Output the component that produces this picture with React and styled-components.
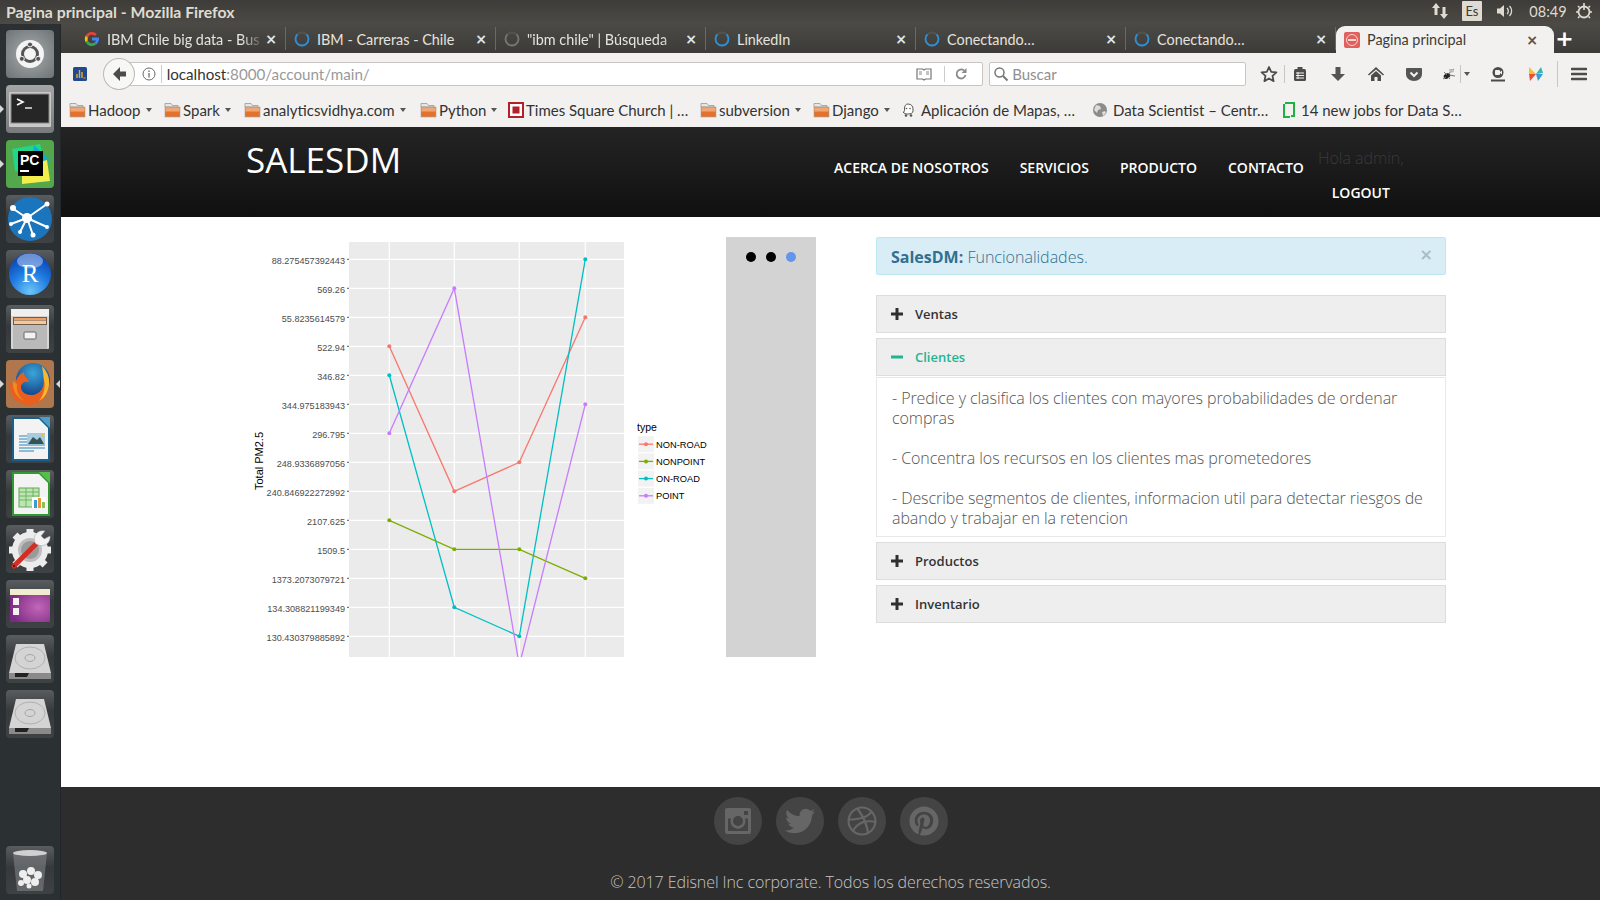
import React from 'react';
import styled, { createGlobalStyle } from 'styled-components';
import { FaTwitter, FaDribbble, FaPinterest } from 'react-icons/fa';

const GlobalStyle = createGlobalStyle`
  html, body { margin: 0; padding: 0; height: 100%; overflow: hidden; background: #fff; }
  * { box-sizing: border-box; }
  #root { width: 1600px; height: 900px; }
`;

const Screen = styled.div`
  width: 1600px;
  height: 900px;
  display: flex;
  flex-direction: column;
  font-family: "Open Sans", sans-serif;
  overflow: hidden;
`;

/* top ubuntu bar */
const TitleBar = styled.div`
  height: 24px;
  flex: none;
  display: flex;
  align-items: center;
  padding: 0 0 2px 6px;
  background: linear-gradient(#3d3c38, #4c4a45);
  color: #dfdbd2;
  font: 700 15.8px Lato, sans-serif;
`;

const Tray = styled.div`
  margin-left: auto;
  display: flex;
  align-items: center;
  height: 24px;
  color: #dfdbd2;
  font: 400 14.5px Lato, sans-serif;
`;

const TraySlot = styled.div`
  width: ${(p) => p.$w}px;
  margin-right: ${(p) => p.$mr || 0}px;
  display: flex;
  justify-content: center;
  align-items: center;
`;

const LangBox = styled.div`
  width: 20px;
  height: 20px;
  margin-right: 8px;
  background: #dfdbd2;
  color: #3c3b37;
  border-radius: 1px;
  font-size: 13px;
  display: flex;
  align-items: center;
  justify-content: center;
`;

const Body = styled.div`
  flex: 1;
  display: flex;
  min-height: 0;
`;

/* launcher down the left */
const Launcher = styled.div`
  width: 61px;
  flex: none;
  background: #2b3033;
  padding: 6px 0 6px 6px;
  display: flex;
  flex-direction: column;
  gap: 7px;
  border-right: 1px solid #23272a;
`;

const Tile = styled.div`
  position: relative;
  width: 48px;
  height: 48px;
  flex: none;
  border-radius: 4px;
  background: ${(p) => p.$bg || 'linear-gradient(#5a5d5f, #35393b 45%, #3e4244)'};
  margin-top: ${(p) => (p.$bottom ? 'auto' : '0')};
  svg { display: block; }
`;

const Pip = styled.span`
  position: absolute;
  top: 20px;
  ${(p) => (p.$right ? 'right: -6px;' : 'left: -6px;')}
  border-style: solid;
  border-width: 4px 0 4px 4px;
  border-color: transparent transparent transparent #d8d8d8;
  ${(p) => p.$right && 'border-width: 4px 4px 4px 0; border-color: transparent #d8d8d8 transparent transparent;'}
`;

const Firefox = styled.div`
  flex: 1;
  min-width: 0;
  display: flex;
  flex-direction: column;
`;

const TabStrip = styled.div`
  height: 29px;
  flex: none;
  display: flex;
  align-items: stretch;
  padding-left: 15px;
  background: linear-gradient(#4c4a45, #3c3b37);
`;

const Tab = styled.div`
  width: 210px;
  flex: none;
  display: flex;
  align-items: center;
  padding: 1px 8px 0;
  margin-top: 3px;
  color: #e4e3df;
  font: 400 14.4px Lato, sans-serif;
  border-right: 1px solid #6a6963;
  height: 23px;
`;

const ActiveTab = styled(Tab)`
  width: 218px;
  height: 27px;
  margin: 2px 0 0 0;
  padding: 0 16px 0 8px;
  border: 0;
  border-radius: 9px 9px 0 0;
  background: #f2f1f0;
  color: #3c3b37;
`;

const TabLabel = styled.span`
  flex: 1;
  margin-left: 7px;
  white-space: nowrap;
  overflow: hidden;
  ${(p) => p.$fade && 'mask-image: linear-gradient(90deg, #000 85%, transparent);'}
`;

const TabClose = styled.span`
  width: 12px;
  text-align: center;
  font: 700 14px "DejaVu Sans", sans-serif;
  color: ${(p) => (p.$dark ? '#555' : '#e4e3df')};
`;

const NewTab = styled.div`
  width: 21px;
  color: #fff;
  font: 700 22px "DejaVu Sans", sans-serif;
  display: flex;
  align-items: center;
  justify-content: center;
`;

const NavBar = styled.div`
  height: 42px;
  flex: none;
  background: #f2f1f0;
  display: flex;
  align-items: center;
  padding-left: 11px;
`;

const BackButton = styled.div`
  position: relative;
  z-index: 1;
  width: 32px;
  height: 32px;
  margin-left: 15px;
  border-radius: 50%;
  background: #f7f7f6;
  border: 1px solid #bcb9b4;
  display: flex;
  align-items: center;
  justify-content: center;
`;

const UrlBar = styled.div`
  width: 874px;
  height: 24px;
  margin-left: -15px;
  padding: 0 6px 0 21px;
  background: #fff;
  border: 1px solid #c9c6c1;
  border-radius: 2px;
  display: flex;
  align-items: center;
  font: 400 15.2px Lato, sans-serif;
  color: #999;
  b { font-weight: 400; color: #333; }
`;

const UrlText = styled.div`
  flex: 1;
  margin-left: 5px;
  padding-left: 5px;
  border-left: 1px solid #ccc;
`;

const UrlTool = styled.div`
  width: ${(p) => p.$w}px;
  height: 16px;
  margin-left: ${(p) => p.$ml || 0}px;
  display: flex;
  justify-content: center;
  align-items: center;
  ${(p) => p.$line && 'border-left: 1px solid #ccc;'}
`;

const SearchBar = styled.div`
  width: 260px;
  height: 24px;
  margin-left: 6px;
  padding-left: 3px;
  background: #fff;
  border: 1px solid #c9c6c1;
  border-radius: 2px;
  display: flex;
  align-items: center;
  gap: 3px;
  font: 400 15px Lato, sans-serif;
  color: #8f8f8f;
`;

const NavIcon = styled.div`
  width: ${(p) => p.$w}px;
  margin-left: ${(p) => p.$ml || 0}px;
  flex: none;
  display: flex;
  justify-content: center;
  align-items: center;
`;

const NavDivider = styled.div`
  width: 1px;
  height: ${(p) => p.$h || 18}px;
  flex: none;
  background: #c9c6c1;
  margin-left: ${(p) => p.$ml || 0}px;
  margin-right: ${(p) => p.$mr || 0}px;
`;

const BookmarkBar = styled.div`
  height: 32px;
  flex: none;
  background: #f2f1f0;
  display: flex;
  align-items: center;
  padding: 0 0 2px 8px;
  font: 400 15px Lato, sans-serif;
  color: #333;
`;

const Bookmark = styled.div`
  width: ${(p) => p.$w}px;
  flex: none;
  display: flex;
  align-items: center;
  gap: ${(p) => p.$gap || 2}px;
  white-space: nowrap;
`;

const Caret = styled.span`
  margin-left: ${(p) => (p.$flat ? 0 : 3)}px;
  border-style: solid;
  border-width: 4px 3px 0 3px;
  border-color: #555 transparent transparent transparent;
`;

/* the django page itself */
const Page = styled.div`
  flex: 1;
  min-height: 0;
  display: flex;
  flex-direction: column;
  background: #fff;
`;

const Header = styled.div`
  height: 90px;
  flex: none;
  display: flex;
  align-items: flex-start;
  padding-left: 185px;
  background: linear-gradient(#242424, #101010);
  color: #fff;
`;

const Logo = styled.div`
  width: 588px;
  font-size: 35px;
  font-weight: 400;
  line-height: 66px;
`;

const MainNav = styled.div`
  display: flex;
  gap: 31px;
  margin-top: 31px;
  font-size: 14px;
  font-weight: 600;
  line-height: 20px;
`;

const UserBlock = styled.div`
  width: 92px;
  margin-left: 11px;
  text-align: center;
  font-size: 14px;
  font-weight: 600;
  padding-top: 19px;
`;

const Hola = styled.div`
  color: #3a3a3a;
  font-size: 16px;
  font-weight: 300;
  line-height: 25px;
  margin-bottom: 12px;
`;

const Content = styled.div`
  flex: 1;
  display: flex;
  align-items: flex-start;
  padding: 20px 0 0 179px;
`;

const ChartSvg = styled.svg`
  display: block;
  flex: none;
  font-family: "Liberation Sans", Arial, sans-serif;
`;

const Carousel = styled.div`
  width: 90px;
  height: 420px;
  flex: none;
  background: #d3d3d3;
  display: flex;
  justify-content: center;
  gap: 10px;
  padding-top: 15px;
`;

const Dot = styled.span`
  width: 10px;
  height: 10px;
  border-radius: 50%;
  background: ${(p) => (p.$on ? '#6495ed' : '#000')};
`;

const Side = styled.div`
  width: 570px;
  margin-left: 60px;
  flex: none;
`;

const Alert = styled.div`
  height: 38px;
  display: flex;
  justify-content: space-between;
  align-items: center;
  padding: 1px 15px 0 14px;
  background: #d9edf7;
  border: 1px solid #bce8f1;
  border-radius: 2px;
  color: #31708f;
  font-size: 16px;
  font-weight: 300;
  margin-bottom: 20px;
  b { font-weight: 700; }
`;

const AlertClose = styled.span`
  color: #a9bcc6;
  font: 700 16px "DejaVu Sans", sans-serif;
  margin: -5px -3px 0 0;
`;

const AccHead = styled.div`
  height: 38px;
  display: flex;
  align-items: center;
  gap: 12px;
  padding-left: 14px;
  margin-bottom: ${(p) => (p.$open ? 1 : 5)}px;
  background: #eee;
  border: 1px solid #ddd;
  color: ${(p) => (p.$open ? '#1fb592' : '#333')};
  font-size: 13px;
  font-weight: 600;
`;

const AccBody = styled.div`
  height: 160px;
  margin-bottom: 5px;
  padding: 10px 15px;
  border: 1px solid #e8e8e8;
  color: #555;
  font-size: 16px;
  font-weight: 300;
  letter-spacing: -0.07px;
  line-height: 20px;
  white-space: nowrap;
`;

const Footer = styled.div`
  height: 113px;
  flex: none;
  background: #2d2d2d;
  display: flex;
  flex-direction: column;
  align-items: center;
  padding-top: 10px;
`;

const Socials = styled.div`
  display: flex;
  gap: 14px;
`;

const Social = styled.div`
  width: 48px;
  height: 48px;
  border-radius: 50%;
  background: #444;
  color: #666;
  display: flex;
  align-items: center;
  justify-content: center;
  font-size: 30px;
`;

const Copy = styled.div`
  margin-top: 26px;
  color: #c4c4c4;
  font-size: 16px;
  font-weight: 300;
  letter-spacing: -0.08px;
  line-height: 22px;
`;

const SmallSvg = styled.svg`
  flex: none;
  display: block;
`;

/* ---------- chart data ---------- */
const yLabels = [
  '88.275457392443', '569.26', '55.8235614579', '522.94', '346.82', '344.975183943',
  '296.795', '248.9336897056', '240.846922272992', '2107.625', '1509.5', '1373.2073079721',
  '134.308821199349', '130.430379885892',
];
const xGrid = [149.3, 214.3, 279.3, 345.3];
const rowY = (i) => 22.3 + i * 29;
const series = [
  { name: 'NON-ROAD', color: '#F8766D', rows: [3, 8, 7, 2] },
  { name: 'NONPOINT', color: '#7CAE00', rows: [9, 10, 10, 11] },
  { name: 'ON-ROAD', color: '#00BFC4', rows: [4, 12, 13, 0] },
  { name: 'POINT', color: '#C77CFF', rows: [6, 1, 14, 5] },
];

const Chart = () => (
  <ChartSvg width="486" height="421" viewBox="0 0 486 421">
    <defs>
      <clipPath id="plot"><rect x="109" y="5" width="275" height="415" /></clipPath>
    </defs>
    <rect x="109" y="5" width="275" height="415" fill="#ebebeb" />
    {yLabels.map((l, i) => (
      <g key={l}>
        <line x1="109" x2="384" y1={rowY(i)} y2={rowY(i)} stroke="#fff" strokeWidth="1.2" />
        <line x1="107" x2="109" y1={rowY(i)} y2={rowY(i)} stroke="#555" strokeWidth="1" />
        <text x="105" y={rowY(i) + 4.2} textAnchor="end" fontSize="9.1" fill="#4d4d4d">{l}</text>
      </g>
    ))}
    {xGrid.map((x) => <line key={x} x1={x} x2={x} y1="5" y2="420" stroke="#fff" strokeWidth="1.2" />)}
    <g clipPath="url(#plot)">
      {series.map((s) => (
        <g key={s.name}>
          <polyline
            fill="none"
            stroke={s.color}
            strokeWidth="1.3"
            points={s.rows.map((r, i) => `${xGrid[i]},${rowY(r)}`).join(' ')}
          />
          {s.rows.map((r, i) => <circle key={i} cx={xGrid[i]} cy={rowY(r)} r="2" fill={s.color} />)}
        </g>
      ))}
    </g>
    <text transform="translate(23 224) rotate(-90)" textAnchor="middle" fontSize="11" fill="#000">Total PM2.5</text>
    <text x="397" y="194" fontSize="10.5" fill="#000">type</text>
    {series.map((s, i) => (
      <g key={s.name} transform={`translate(398 ${199.2 + i * 17.2})`}>
        <rect width="16" height="16" fill="#f2f2f2" />
        <line x1="1" x2="15" y1="8" y2="8" stroke={s.color} strokeWidth="1.3" />
        <circle cx="8" cy="8" r="2" fill={s.color} />
        <text x="18" y="11.5" fontSize="9.3" fill="#000">{s.name}</text>
      </g>
    ))}
  </ChartSvg>
);

/* ---------- launcher icons ---------- */
const Ico = ({ children }) => <svg width="48" height="48" viewBox="0 0 48 48">{children}</svg>;

const UbuntuIcon = () => (
  <Ico>
    <circle cx="24" cy="24" r="14" fill="#f4f4f4" />
    <circle cx="24" cy="24" r="7.5" fill="none" stroke="#555" strokeWidth="3" />
    <circle cx="24" cy="14.5" r="2.5" fill="#555" stroke="#f4f4f4" />
    <circle cx="15.8" cy="28.8" r="2.5" fill="#555" stroke="#f4f4f4" />
    <circle cx="32.2" cy="28.8" r="2.5" fill="#555" stroke="#f4f4f4" />
  </Ico>
);
const TerminalIcon = () => (
  <Ico>
    <rect x="3" y="7" width="42" height="35" rx="1" fill="#c9c9c7" />
    <rect x="5" y="9" width="38" height="29" fill="#262626" stroke="#8a8a8a" />
    <path d="M11 14l6 3-6 3" fill="none" stroke="#fff" strokeWidth="1.6" />
    <path d="M19 23h7" stroke="#ddd" strokeWidth="1.6" />
  </Ico>
);
const PyCharmIcon = () => (
  <Ico>
    <path d="M6 9l28-5 6 20-12 12-19-5z" fill="#21d789" />
    <path d="M28 5l16 15-9 8-9-9z" fill="#0faed0" />
    <path d="M16 27l25-7 3 21-28 3z" fill="#f3ee4e" />
    <rect x="12" y="11" width="25" height="25" fill="#000" />
    <text x="14" y="25" fontFamily="Liberation Sans" fontWeight="700" fontSize="14" fill="#fff">PC</text>
    <rect x="14" y="30" width="9" height="2" fill="#fff" />
  </Ico>
);
const NetworkIcon = () => (
  <Ico>
    <circle cx="24" cy="24" r="22" fill="#1b75bc" />
    <g stroke="#fff" strokeWidth="2">
      <path d="M21 23L6 13M21 23L41 9M21 23L5 29M21 23L14 37M21 23L27 40M21 23L41 32" />
    </g>
    <g fill="#fff">
      <circle cx="21" cy="23" r="5" /><circle cx="7" cy="13" r="3" /><circle cx="41" cy="9" r="2.5" />
      <circle cx="5" cy="29" r="2" /><circle cx="14" cy="37" r="2" /><circle cx="27" cy="40" r="2.5" />
      <circle cx="41" cy="32" r="2" />
    </g>
  </Ico>
);
const RIcon = () => (
  <Ico>
    <defs>
      <radialGradient id="rb" cx="50%" cy="92%" r="85%">
        <stop offset="0" stopColor="#6cc6f7" /><stop offset="0.55" stopColor="#1f7be0" /><stop offset="1" stopColor="#0c47b8" />
      </radialGradient>
    </defs>
    <circle cx="24" cy="24" r="21" fill="url(#rb)" />
    <ellipse cx="24" cy="11" rx="13" ry="7.5" fill="#fff" opacity="0.4" />
    <text x="24" y="32" textAnchor="middle" fontFamily="Liberation Serif" fontSize="25" fill="#fff">R</text>
  </Ico>
);
const FilesIcon = () => (
  <Ico>
    <rect x="5" y="4" width="38" height="40" rx="1" fill="#d6d6d6" />
    <rect x="5" y="4" width="38" height="7" fill="#efefef" />
    <rect x="7" y="12" width="34" height="8" fill="#6d5b4c" />
    <path d="M8 13h32v2H8z" fill="#ef9f62" />
    <path d="M8 15.5h32V19H8z" fill="#f5c89b" />
    <path d="M7 20h34v24H7z" fill="#b9b9b9" />
    <rect x="18" y="27" width="12" height="7" rx="1" fill="#f2f2f2" stroke="#666" />
  </Ico>
);
const FirefoxIcon = () => (
  <Ico>
    <defs>
      <radialGradient id="ffb" cx="50%" cy="30%" r="70%">
        <stop offset="0" stopColor="#3aa5d8" /><stop offset="1" stopColor="#123f86" />
      </radialGradient>
    </defs>
    <circle cx="27" cy="20" r="17" fill="url(#ffb)" />
    <path d="M41 13c6 13-2 32-18 32C10 45 2 34 4 21c1.5 3 3 5 5 5.5C9 21 12 15 18 12c-1 4 5 7 5 10-4-1-8 1-8 5 0 5 5 8 10 8 9 0 15-8 12-19z" fill="#ea5f1e" />
    <path d="M36 6c6 6 9 15 6 23-1 5-5 10-9 12 4-5 7-13 5-21z" fill="#f7b62c" />
    <path d="M7 21c-1 8 3 17 12 20-7-4-9-11-8-17z" fill="#f28a1f" />
  </Ico>
);
const DocIcon = ({ edge, corner, children }) => (
  <Ico>
    <path d="M6 2h29l9 9v35H6z" fill={edge} />
    <path d="M33 2h11v11z" fill={corner} />
    <path d="M8 4h25l9 9v31H8z" fill="#f3f3f3" />
    {children}
  </Ico>
);
const WriterIcon = () => (
  <DocIcon edge="#18618f" corner="#4aa0c9">
    <g stroke="#2d83b5" strokeWidth="1.2">
      <path d="M13 21h8M13 24h8M13 27h8M13 30h26M13 33h26M13 36h15" />
    </g>
    <rect x="21" y="18" width="18" height="11" fill="#a9cbe0" />
    <path d="M22 29l5-7 4 3 3-3 4 7z" fill="#355" />
    <circle cx="37" cy="20" r="1.5" fill="#f2c230" />
  </DocIcon>
);
const CalcIcon = () => (
  <DocIcon edge="#2f9a2f" corner="#59bd4a">
    <rect x="13" y="18" width="20" height="19" fill="#bfe3b4" stroke="#5dad4f" />
    <path d="M13 22h20M13 26h20M13 30h20M20 18v19M27 18v19" stroke="#5dad4f" strokeWidth="0.8" />
    <rect x="26" y="27" width="14" height="11" fill="#fff" />
    <rect x="28" y="30" width="3" height="8" fill="#3b9bd5" />
    <rect x="32" y="28" width="3" height="10" fill="#e8963a" />
    <rect x="36" y="32" width="3" height="6" fill="#8cc152" />
  </DocIcon>
);
const SettingsIcon = () => (
  <Ico>
    <circle cx="24" cy="25" r="13" fill="#bdbdbd" />
    <circle cx="24" cy="25" r="15" fill="none" stroke="#ececec" strokeWidth="6" />
    <circle cx="24" cy="25" r="9" fill="#9a9a9a" />
    <g stroke="#ececec" strokeWidth="7">
      <path d="M24 4v6M24 40v6M3 25h5M40 25h5M9 10l4 4M35 36l4 4M9 40l4-4" />
    </g>
    <path d="M8 41L31 18" stroke="#d02f25" strokeWidth="5" strokeLinecap="round" />
    <circle cx="8" cy="41" r="1.2" fill="#7a120d" />
    <path d="M29 18c-3-7 3-14 10-12l-4 5 3 3 6-3c1 8-8 13-15 7z" fill="#f2f2f2" stroke="#999" strokeWidth="0.5" />
  </Ico>
);
const PurpleIcon = () => (
  <Ico>
    <defs>
      <radialGradient id="pu" cx="70%" cy="55%" r="70%">
        <stop offset="0" stopColor="#c266b8" /><stop offset="1" stopColor="#7c2a84" />
      </radialGradient>
    </defs>
    <rect x="4" y="9" width="40" height="33" rx="1" fill="url(#pu)" />
    <rect x="4" y="9" width="40" height="6" fill="#f2eccf" />
    <rect x="7" y="18" width="6" height="7" fill="#f3f3f3" />
    <rect x="7" y="28" width="6" height="7" fill="#f3f3f3" />
  </Ico>
);
const DiskIcon = () => (
  <Ico>
    <path d="M10 9h28l7 29H3z" fill="#d4d4d4" />
    <rect x="3" y="38" width="42" height="6" fill="#8a8a8a" />
    <path d="M9 38h14l-2 4H9z" fill="#222" />
    <ellipse cx="24" cy="23" rx="15" ry="11" fill="none" stroke="#b0b0b0" />
    <ellipse cx="24" cy="23" rx="5" ry="3.5" fill="none" stroke="#a5a5a5" />
  </Ico>
);
const TrashIcon = () => (
  <Ico>
    <path d="M7 7h34l-4 38H11z" fill="#85898a" opacity="0.55" />
    <ellipse cx="24" cy="7" rx="17" ry="3" fill="#cfd1d1" />
    <g fill="#eee">
      <circle cx="17" cy="28" r="4" /><circle cx="25" cy="25" r="4" /><circle cx="32" cy="29" r="4" />
      <circle cx="21" cy="34" r="4" /><circle cx="29" cy="36" r="4" /><circle cx="15" cy="37" r="3" />
      <circle cx="23" cy="40" r="2.5" />
    </g>
  </Ico>
);

const launcherApps = [
  { key: 'ubuntu', bg: 'radial-gradient(circle at 50% 50%, #a9adae, #6d7375)', icon: <UbuntuIcon /> },
  { key: 'term', bg: 'linear-gradient(#a4a6a5, #77797a)', icon: <TerminalIcon />, pip: true },
  { key: 'pycharm', bg: '#52a84a', icon: <PyCharmIcon />, pip: true },
  { key: 'net', icon: <NetworkIcon /> },
  { key: 'r', icon: <RIcon /> },
  { key: 'files', icon: <FilesIcon /> },
  { key: 'firefox', bg: '#b0774d', icon: <FirefoxIcon />, pip: true, active: true },
  { key: 'writer', icon: <WriterIcon /> },
  { key: 'calc', icon: <CalcIcon /> },
  { key: 'settings', icon: <SettingsIcon /> },
  { key: 'purple', icon: <PurpleIcon /> },
  { key: 'disk1', icon: <DiskIcon /> },
  { key: 'disk2', icon: <DiskIcon /> },
];

/* ---------- small browser icons ---------- */
const Small = ({ w = 16, h = 16, children }) => (
  <SmallSvg width={w} height={h} viewBox={`0 0 ${w} ${h}`}>{children}</SmallSvg>
);

const GoogleG = () => (
  <Small>
    <path d="M8 1a7 7 0 0 1 4.8 1.9l-2 2A4.2 4.2 0 0 0 3.9 6.6L1.6 4.8A7 7 0 0 1 8 1z" fill="#ea4335" />
    <path d="M1.6 4.8l2.3 1.800a4.2 4.2 0 0 0 0 2.800L1.6 11.2a7 7 0 0 1 0-6.400z" fill="#fbbc05" />
    <path d="M3.9 9.4A4.2 4.2 0 0 0 10.3 11.5l2.2 1.800A7 7 0 0 1 1.6 11.2z" fill="#34a853" />
    <path d="M15 6.6H8v2.800h4a3.400 3.400 0 0 1-1.700 2.100l2.200 1.800c1.700-1.500 2.900-4 2.500-6.700z" fill="#4285f4" />
  </Small>
);
const Spinner = ({ color = '#2a90d9' }) => (
  <Small>
    <circle cx="8" cy="8" r="6.5" fill="none" stroke="#55534e" strokeWidth="1.8" />
    <path d="M3.4 3.4A6.5 6.5 0 1 0 12.6 3.4" fill="none" stroke={color} strokeWidth="1.8" />
  </Small>
);
const PageFav = () => (
  <Small>
    <rect width="16" height="16" rx="2" fill="#e0605c" />
    <circle cx="8" cy="8" r="5.5" fill="none" stroke="#f6d5d3" />
    <rect x="4" y="7" width="8" height="2" fill="#f6d5d3" />
  </Small>
);
const Folder = () => (
  <Small w={17} h={16}>
    <path d="M1 1.5h6l1.5 2H14V5H1z" fill="#e9e6e2" stroke="#9b9994" strokeWidth="0.8" />
    <rect x="1" y="5" width="15" height="10" fill="#e2722e" stroke="#aaa49c" strokeWidth="0.6" />
    <rect x="1.5" y="5.5" width="14" height="4" fill="#f0a774" />
  </Small>
);
const TimesIcon = () => (
  <Small>
    <rect x="1" y="1" width="14" height="14" fill="#fff" stroke="#b3202a" strokeWidth="2" />
    <rect x="4.5" y="4.5" width="7" height="7" fill="#b3202a" />
  </Small>
);
const WazeIcon = () => (
  <Small>
    <path d="M8 2c3.500 0 5 2.500 5 5v2c0 2-2 3-5 3-2 0-4-.5-5-2 1 0 1.500-.5 1.500-1.500V7C4.500 4 5.500 2 8 2z" fill="#fff" stroke="#555" />
    <circle cx="6.5" cy="6.5" r="0.8" fill="#555" /><circle cx="10" cy="6.5" r="0.8" fill="#555" />
    <circle cx="6" cy="13.5" r="1.3" fill="#555" /><circle cx="11" cy="13.5" r="1.3" fill="#555" />
  </Small>
);
const GlobeIcon = () => (
  <Small>
    <circle cx="8" cy="8" r="7" fill="#8b8b8b" />
    <path d="M4 3l4 1 1 3-3 1-1 3-3-3zM10 10l3-1 1 2-3 3z" fill="#dcdcdc" />
  </Small>
);
const GreenDoc = () => (
  <Small>
    <path d="M4 1h9v13h-3M3 2v13h6" fill="none" stroke="#1fb141" strokeWidth="2" />
  </Small>
);
const SalesFav = () => (
  <Small>
    <rect x="1" y="1" width="14" height="14" rx="1.5" fill="#1f4b8e" />
    <path d="M5 12V8M7.5 12V4M10 12V6" stroke="#f5a623" strokeWidth="1.4" />
    <path d="M11.5 12h2" stroke="#f5a623" />
  </Small>
);
const BackArrow = () => (
  <Small w={18} h={18}>
    <path d="M10 2L3 9l7 7v-4.500h6v-5h-6z" fill="#4c4c4c" />
  </Small>
);
const InfoIcon = () => (
  <Small w={14} h={14}>
    <circle cx="7" cy="7" r="6" fill="none" stroke="#6a6a6a" />
    <path d="M7 6v4.500M7 3.500v1.500" stroke="#6a6a6a" strokeWidth="1.3" />
  </Small>
);
const ReaderIcon = () => (
  <Small>
    <path d="M1 3h5.500L8 4l1.500-1H15v10H9.500L8 14l-1.500-1H1z" fill="#fff" stroke="#777" strokeWidth="1.2" />
    <path d="M3 6h3M3 8h3M10 6h3M10 8h3" stroke="#888" />
  </Small>
);
const ReloadIcon = () => (
  <Small w={14} h={14}>
    <path d="M11.500 8a4.500 4.500 0 1 1-1.500-4.500" fill="none" stroke="#8a8a8a" strokeWidth="1.8" />
    <path d="M12.500 1v5h-5z" fill="#8a8a8a" />
  </Small>
);
const SearchIcon = () => (
  <Small>
    <circle cx="6.5" cy="6.5" r="4.5" fill="none" stroke="#777" strokeWidth="1.5" />
    <path d="M10 10l4.500 4.500" stroke="#777" strokeWidth="2" />
  </Small>
);
const StarIcon = () => (
  <Small w={18} h={18}>
    <path d="M9 2l2.200 4.800 5.200.6-3.900 3.500 1.100 5.200L9 13.500l-4.600 2.600 1.100-5.200L1.600 7.400l5.200-.6z" fill="none" stroke="#4c4c4c" strokeWidth="1.8" strokeLinejoin="round" />
  </Small>
);
const ClipIcon = () => (
  <Small>
    <rect x="2" y="3" width="12" height="12" rx="1.5" fill="#4c4c4c" />
    <rect x="5.5" y="1" width="5" height="3" fill="#4c4c4c" />
    <path d="M4 7h8M4 9.500h8M4 12h8M6 6v7" stroke="#f2f1f0" />
  </Small>
);
const DownIcon = () => (
  <Small>
    <path d="M5.500 1h5v7H15l-7 7-7-7h4.500z" fill="#555" />
  </Small>
);
const HomeIcon = () => (
  <Small>
    <path d="M8 1L0 8.500l1 1L8 3.500l7 6 1-1z" fill="#4c4c4c" />
    <path d="M3 9.500L8 5l5 4.500V15H9.500v-4h-3v4H3z" fill="#4c4c4c" />
  </Small>
);
const PocketIcon = () => (
  <Small>
    <path d="M1 2h14a1 1 0 0 1 1 1v5c0 4-3.500 7-8 7s-8-3-8-7V3a1 1 0 0 1 1-1z" fill="#555" />
    <path d="M4.500 6.500L8 10l3.500-3.500" fill="none" stroke="#f2f1f0" strokeWidth="2" />
  </Small>
);
const BugIcon = () => (
  <Small>
    <ellipse cx="6" cy="10" rx="3.5" ry="2.5" fill="#222" transform="rotate(-30 6 10)" />
    <path d="M7 8l6-5M8 9l6 1M3 6l3 3M2 13l3-2M9 13l-2-2" stroke="#777" />
    <path d="M8 3l4 0 1 3-4 1z" fill="#bbb" />
  </Small>
);
const CamIcon = () => (
  <Small>
    <circle cx="8" cy="6.5" r="5.5" fill="#4c4c4c" />
    <rect x="5" y="4" width="5" height="5" rx="1" fill="#f2f1f0" />
    <path d="M10 6l2-1.500v4L10 7z" fill="#f2f1f0" />
    <rect x="1" y="13.5" width="14" height="2" fill="#4c4c4c" />
  </Small>
);
const SlidesLogo = () => (
  <Small>
    <path d="M1 1l7 7H1z" fill="#f2c230" />
    <path d="M8 8l5-7 2 6z" fill="#35b8b0" />
    <path d="M1 8h7l-6 7z" fill="#e8503a" />
    <path d="M8 8h7l-5 7z" fill="#3b9bd5" />
  </Small>
);
const Burger = () => (
  <Small>
    <path d="M1 3h14M1 8h14M1 13h14" stroke="#4c4c4c" strokeWidth="2.6" strokeLinecap="round" />
  </Small>
);
const TrayArrows = () => (
  <Small w={18} h={18}>
    <path d="M5 1l4 5H6.500v7h-3V6H1zM13 17l4-5h-2.500V5h-3v7H9z" fill="#dfdbd2" />
  </Small>
);
const Volume = () => (
  <Small w={20} h={16}>
    <path d="M1 5.500h3L8 2v12L4 10.500H1z" fill="#dfdbd2" />
    <path d="M11 5a4 4 0 0 1 0 6M13.500 3a7 7 0 0 1 0 10" fill="none" stroke="#dfdbd2" strokeWidth="1.3" />
  </Small>
);
const PowerGear = () => (
  <Small w={18} h={18}>
    <circle cx="9" cy="10" r="5.5" fill="none" stroke="#dfdbd2" strokeWidth="1.8" />
    <path d="M9 1v7M3 4l1.500 1.500M15 4l-1.500 1.500M1 10h2M15 10h2M3 16l1.500-1.500M15 16l-1.500-1.500" stroke="#dfdbd2" strokeWidth="1.6" />
  </Small>
);
const InstaOld = () => (
  <Small w={28} h={28}>
    <path fillRule="evenodd" fill="#666" d="M3 1h22a2 2 0 0 1 2 2v22a2 2 0 0 1-2 2H3a2 2 0 0 1-2-2V3a2 2 0 0 1 2-2zM20 4v4h4V4zM4 11.500V24h20V11.500h-3a7.500 7.500 0 1 1-14 0zM14 9a5 5 0 1 0 0 10 5 5 0 0 0 0-10z" />
  </Small>
);
const PlusIcon = () => (
  <Small w={12} h={12}>
    <path d="M4.500 0h3v4.500H12v3H7.500V12h-3V7.500H0v-3h4.500z" fill="#2f2f2f" />
  </Small>
);
const MinusIcon = () => (
  <Small w={12} h={12}>
    <rect y="4.5" width="12" height="3" fill="#1fb592" />
  </Small>
);

const tabs = [
  { label: 'IBM Chile big data - Bus', icon: <GoogleG />, fade: true },
  { label: 'IBM - Carreras - Chile', icon: <Spinner /> },
  { label: '"ibm chile" | Búsqueda', icon: <Spinner color="#77756f" />, fade: true },
  { label: 'LinkedIn', icon: <Spinner /> },
  { label: 'Conectando…', icon: <Spinner /> },
  { label: 'Conectando…', icon: <Spinner /> },
];

const bookmarks = [
  { label: 'Hadoop', icon: <Folder />, w: 95, menu: true },
  { label: 'Spark', icon: <Folder />, w: 80, menu: true },
  { label: 'analyticsvidhya.com', icon: <Folder />, w: 176, menu: true },
  { label: 'Python', icon: <Folder />, w: 88, menu: true },
  { label: 'Times Square Church | …', icon: <TimesIcon />, w: 192 },
  { label: 'subversion', icon: <Folder />, w: 113, menu: true },
  { label: 'Django', icon: <Folder />, w: 87, menu: true },
  { label: 'Aplicación de Mapas, …', icon: <WazeIcon />, w: 192, gap: 5 },
  { label: 'Data Scientist – Centr…', icon: <GlobeIcon />, w: 189, gap: 5 },
  { label: '14 new jobs for Data S…', icon: <GreenDoc />, w: 190, gap: 4 },
];

const sections = ['Ventas', 'Clientes', 'Productos', 'Inventario'];

export default function App() {
  return (
    <Screen>
      <GlobalStyle />
      <TitleBar>
        Pagina principal - Mozilla Firefox
        <Tray>
          <TraySlot $w={24} $mr={10}><TrayArrows /></TraySlot>
          <LangBox>Es</LangBox>
          <TraySlot $w={32} $mr={6}><Volume /></TraySlot>
          <TraySlot $w={40}>08:49</TraySlot>
          <TraySlot $w={32}><PowerGear /></TraySlot>
        </Tray>
      </TitleBar>
      <Body>
        <Launcher>
          {launcherApps.map((app) => (
            <Tile key={app.key} $bg={app.bg}>
              {app.pip && <Pip />}
              {app.active && <Pip $right />}
              {app.icon}
            </Tile>
          ))}
          <Tile $bottom><TrashIcon /></Tile>
        </Launcher>
        <Firefox>
          <TabStrip>
            {tabs.map((t, i) => (
              <Tab key={i}>
                {t.icon}
                <TabLabel $fade={t.fade}>{t.label}</TabLabel>
                <TabClose>×</TabClose>
              </Tab>
            ))}
            <ActiveTab>
              <PageFav />
              <TabLabel>Pagina principal</TabLabel>
              <TabClose $dark>×</TabClose>
            </ActiveTab>
            <NewTab>+</NewTab>
          </TabStrip>
          <NavBar>
            <SalesFav />
            <BackButton><BackArrow /></BackButton>
            <UrlBar>
              <InfoIcon />
              <UrlText><b>localhost</b>:8000/account/main/</UrlText>
              <UrlTool $w={32}><ReaderIcon /></UrlTool>
              <UrlTool $w={32} $line $ml={4}><ReloadIcon /></UrlTool>
            </UrlBar>
            <SearchBar><SearchIcon />Buscar</SearchBar>
            <NavIcon $w={34} $ml={6}><StarIcon /></NavIcon>
            <NavDivider $ml={-2} $mr={1} />
            <NavIcon $w={28}><ClipIcon /></NavIcon>
            <NavIcon $w={48}><DownIcon /></NavIcon>
            <NavIcon $w={28}><HomeIcon /></NavIcon>
            <NavIcon $w={48}><PocketIcon /></NavIcon>
            <NavIcon $w={22}><BugIcon /></NavIcon>
            <NavDivider />
            <NavIcon $w={12}><Caret $flat /></NavIcon>
            <NavIcon $w={50}><CamIcon /></NavIcon>
            <NavIcon $w={26}><SlidesLogo /></NavIcon>
            <NavDivider $ml={8} $h={26} />
            <NavIcon $w={42}><Burger /></NavIcon>
          </NavBar>
          <BookmarkBar>
            {bookmarks.map((b) => (
              <Bookmark key={b.label} $w={b.w} $gap={b.gap}>
                {b.icon}
                {b.label}
                {b.menu && <Caret />}
              </Bookmark>
            ))}
          </BookmarkBar>
          <Page>
            <Header>
              <Logo>SALESDM</Logo>
              <MainNav>
                <span>ACERCA DE NOSOTROS</span>
                <span>SERVICIOS</span>
                <span>PRODUCTO</span>
                <span>CONTACTO</span>
              </MainNav>
              <UserBlock>
                <Hola>Hola admin,</Hola>
                LOGOUT
              </UserBlock>
            </Header>
            <Content>
              <Chart />
              <Carousel>
                <Dot /><Dot /><Dot $on />
              </Carousel>
              <Side>
                <Alert>
                  <span><b>SalesDM:</b> Funcionalidades.</span>
                  <AlertClose>×</AlertClose>
                </Alert>
                {sections.map((s) => {
                  const open = s === 'Clientes';
                  return (
                    <React.Fragment key={s}>
                      <AccHead $open={open}>
                        {open ? <MinusIcon /> : <PlusIcon />}
                        {s}
                      </AccHead>
                      {open && (
                        <AccBody>
                          - Predice y clasifica los clientes con mayores probabilidades de ordenar<br />
                          compras<br /><br />
                          - Concentra los recursos en los clientes mas prometedores<br /><br />
                          - Describe segmentos de clientes, informacion util para detectar riesgos de<br />
                          abando y trabajar en la retencion
                        </AccBody>
                      )}
                    </React.Fragment>
                  );
                })}
              </Side>
            </Content>
            <Footer>
              <Socials>
                <Social><InstaOld /></Social>
                <Social><FaTwitter /></Social>
                <Social><FaDribbble /></Social>
                <Social><FaPinterest /></Social>
              </Socials>
              <Copy>© 2017 Edisnel Inc corporate. Todos los derechos reservados.</Copy>
            </Footer>
          </Page>
        </Firefox>
      </Body>
    </Screen>
  );
}
